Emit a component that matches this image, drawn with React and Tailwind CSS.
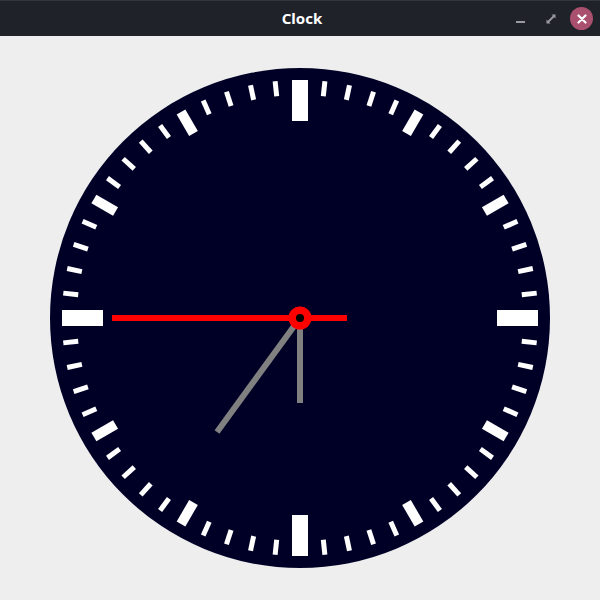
import React from "react";

function Ticks() {
  const items = [];
  for (let i = 0; i < 60; i++) {
    const cardinal = i % 15 === 0;
    const hour = i % 5 === 0;
    const w = cardinal ? 16 : hour ? 10 : 5;
    const r1 = cardinal ? 197 : hour ? 213 : 223;
    const r2 = 238;
    items.push(
      <rect
        key={i}
        x={-w / 2}
        y={-r2}
        width={w}
        height={r2 - r1}
        fill="#ffffff"
        transform={`rotate(${i * 6})`}
      />
    );
  }
  return <g>{items}</g>;
}

export default function App() {
  return (
    <div className="w-[600px] h-[600px] flex flex-col bg-[#eeeeee]" style={{ fontFamily: '"Noto Sans", "Open Sans", sans-serif' }}>
      <div className="h-9 bg-[#202229] border-t border-[#33363d] flex items-center relative">
        <div className="flex-1 text-center text-white text-[15px] font-bold pl-1">Clock</div>
        <div className="absolute right-[7px] top-0 h-9 flex items-center">
          <div className="w-[9px] h-[2px] bg-[#9a9ca2] mt-[5px]"></div>
          <svg width="10" height="10" viewBox="0 0 10 10" className="ml-[21px] -mt-[1px]">
            <path d="M0.5 9.5 L4.5 9.5 L0.5 5.5 Z" fill="#9a9ca2" />
            <path d="M9.5 0.5 L5.5 0.5 L9.5 4.5 Z" fill="#9a9ca2" />
            <path d="M2 8 L8 2" stroke="#9a9ca2" strokeWidth="1.8" />
          </svg>
          <div className="ml-[14px] w-[23px] h-[23px] rounded-full bg-[#a9506f] flex items-center justify-center -mt-[1px]">
            <svg width="10" height="10" viewBox="0 0 10 10">
              <path d="M1.5 1.5 L8.5 8.5 M8.5 1.5 L1.5 8.5" stroke="#ffffff" strokeWidth="2.2" strokeLinecap="round" />
            </svg>
          </div>
        </div>
      </div>
      <div className="flex-1">
        <svg width="600" height="564" viewBox="-300 -282 600 564">
          <circle cx="0" cy="0" r="250" fill="#000026" />
          <Ticks />
          <line x1="0" y1="0" x2="0" y2="85" stroke="#808080" strokeWidth="6" />
          <line x1="0" y1="0" x2="-83" y2="114" stroke="#808080" strokeWidth="6" />
          <line x1="-188" y1="0" x2="47" y2="0" stroke="#ff0000" strokeWidth="6" />
          <circle cx="0" cy="0" r="11.5" fill="#ff0000" />
          <circle cx="0" cy="0" r="4" fill="#000000" />
        </svg>
      </div>
    </div>
  );
}
